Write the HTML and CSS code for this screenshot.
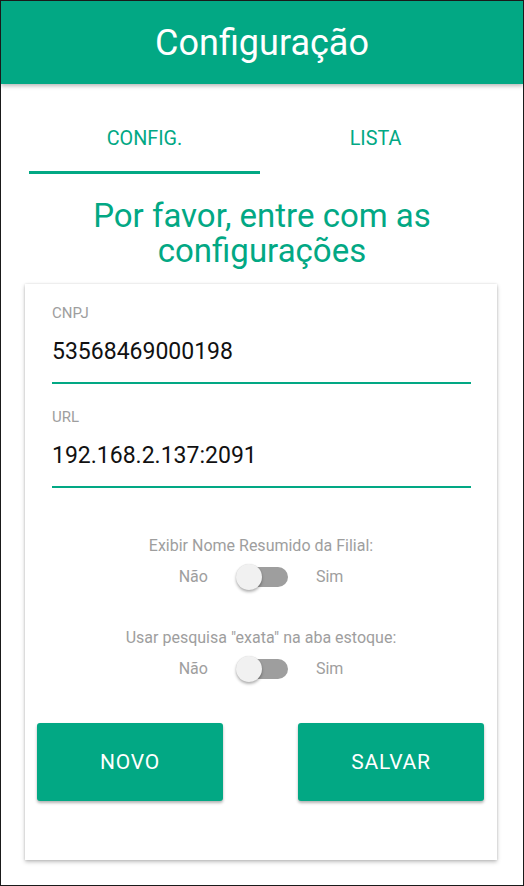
FILE: index.html
```html
<!DOCTYPE html>
<html lang="pt-BR">
<head>
<meta charset="utf-8">
<title>Configuração</title>
<link rel="stylesheet" href="styles.css">
</head>
<body>
<div class="screen">
  <header class="toolbar">
    <h1 class="toolbar-title">Configuração</h1>
  </header>

  <nav class="tabs">
    <div class="tab tab-active">CONFIG.</div>
    <div class="tab">LISTA</div>
  </nav>

  <h2 class="heading">Por favor, entre com as configurações</h2>

  <section class="card">
    <div class="field">
      <div class="field-label">CNPJ</div>
      <div class="field-input">53568469000198</div>
    </div>
    <div class="field field-second">
      <div class="field-label">URL</div>
      <div class="field-input">192.168.2.137:2091</div>
    </div>

    <div class="option option-first">
      <div class="option-label">Exibir Nome Resumido da Filial:</div>
      <div class="option-row">
        <span class="option-text">Não</span>
        <span class="switch"><span class="switch-track"></span><span class="switch-thumb"></span></span>
        <span class="option-text">Sim</span>
      </div>
    </div>

    <div class="option">
      <div class="option-label">Usar pesquisa "exata" na aba estoque:</div>
      <div class="option-row">
        <span class="option-text">Não</span>
        <span class="switch"><span class="switch-track"></span><span class="switch-thumb"></span></span>
        <span class="option-text">Sim</span>
      </div>
    </div>

    <div class="actions">
      <button class="btn">NOVO</button>
      <button class="btn">SALVAR</button>
    </div>
  </section>
</div>
</body>
</html>
```

FILE: styles.css
```css
* { box-sizing: border-box; }

html, body {
  margin: 0;
  padding: 0;
  background: #fff;
}

body {
  font-family: Roboto, "Liberation Sans", Arial, sans-serif;
}

.screen {
  width: 524px;
  height: 886px;
  border: 1px solid #1a1a1a;
  display: flex;
  flex-direction: column;
  overflow: hidden;
}

.toolbar {
  height: 83px;
  background: #02a884;
  display: flex;
  align-items: center;
  justify-content: center;
  box-shadow: 0 2px 4px rgba(0, 0, 0, 0.28);
  position: relative;
  z-index: 1;
  flex-shrink: 0;
}

.toolbar-title {
  margin: 0;
  color: #fff;
  font-weight: 400;
  font-size: 36px;
  line-height: 42px;
  padding-top: 1px;
}

.tabs {
  display: flex;
  margin: 30px 0 0 28px;
  width: 462px;
}

.tab {
  flex: 1;
  height: 60px;
  line-height: 50px;
  text-align: center;
  color: #02a884;
  font-size: 19.8px;
  border-bottom: 3px solid transparent;
}

.tab-active {
  border-bottom-color: #02a884;
}

.heading {
  margin: 24px 0 0;
  text-align: center;
  color: #02a884;
  font-weight: 400;
  font-size: 33px;
  line-height: 35px;
  padding: 0 30px;
}

.card {
  margin: 16px 0 0 24px;
  width: 472px;
  height: 576px;
  background: #fff;
  box-shadow: 0 2px 4px rgba(0, 0, 0, 0.25), 0 0 2px rgba(0, 0, 0, 0.12);
  padding-top: 20px;
  display: flex;
  flex-direction: column;
}

.field {
  margin: 0 26px 0 27px;
  border-bottom: 2px solid #02a884;
  padding-bottom: 16px;
}

.field-second {
  margin-top: 24px;
}

.field-label {
  font-size: 15px;
  line-height: 18px;
  color: #9e9e9e;
  margin-bottom: 16px;
}

.field-input {
  font-size: 23px;
  line-height: 28px;
  color: #111;
}

.option {
  margin-top: 37px;
  display: flex;
  flex-direction: column;
  align-items: center;
}

.option-first {
  margin-top: 48px;
}

.option-label {
  font-size: 16px;
  line-height: 20px;
  color: #9e9e9e;
}

.option-row {
  margin-top: 7px;
  height: 28px;
  display: flex;
  align-items: center;
  gap: 28px;
}

.option-text {
  font-size: 16px;
  line-height: 20px;
  color: #9e9e9e;
}

.switch {
  position: relative;
  width: 52px;
  height: 28px;
  display: flex;
  align-items: center;
}

.switch-track {
  display: block;
  margin-left: 4px;
  width: 48px;
  height: 20px;
  border-radius: 10px;
  background: #9e9e9e;
}

.switch-thumb {
  position: absolute;
  left: 0;
  top: 1px;
  width: 26px;
  height: 26px;
  border-radius: 50%;
  background: #f1f1f1;
  box-shadow: 0 2px 3px rgba(0, 0, 0, 0.3), 0 0 1px rgba(0, 0, 0, 0.15);
}

.actions {
  margin-top: 40px;
  padding: 0 13px 0 12px;
  display: flex;
  justify-content: space-between;
}

.btn {
  width: 186px;
  height: 78px;
  border: none;
  border-radius: 3px;
  background: #02a884;
  color: #fff;
  font-family: Roboto, "Liberation Sans", Arial, sans-serif;
  font-size: 21px;
  letter-spacing: 0.8px;
  box-shadow: 0 2px 3px rgba(0, 0, 0, 0.3);
  padding: 0;
}
```
